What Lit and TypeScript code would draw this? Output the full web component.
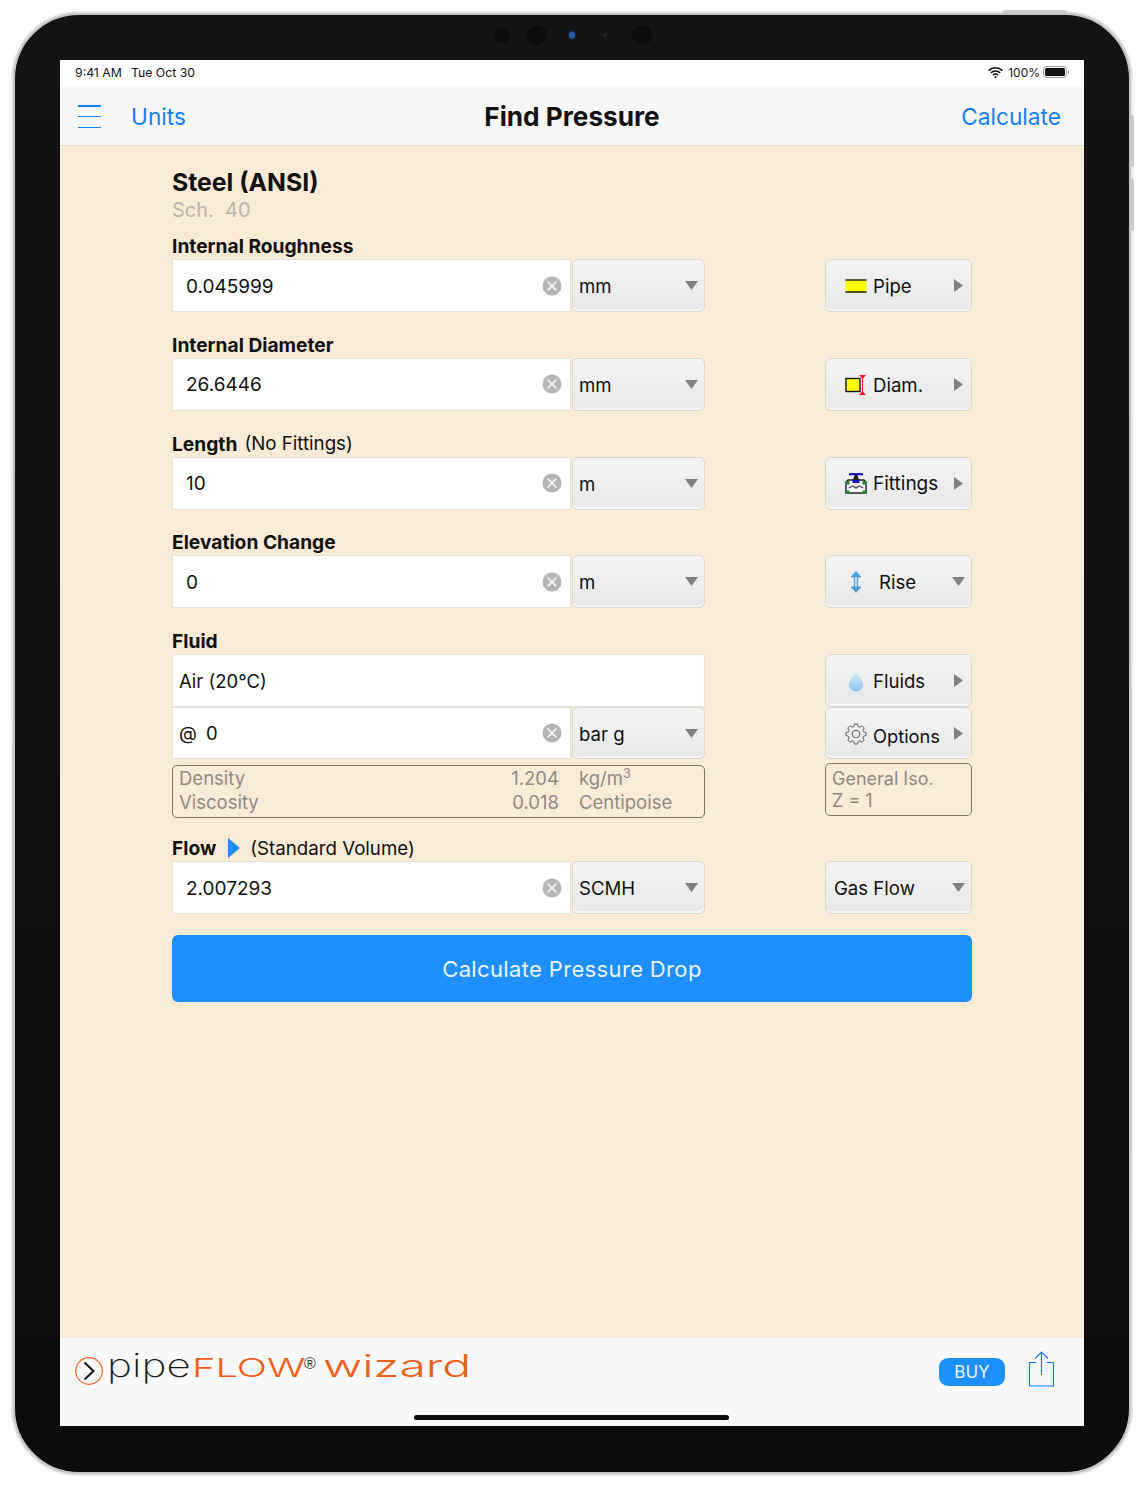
import { LitElement, html, css, svg } from "lit";
import { customElement } from "lit/decorators.js";

const clearIcon = html`<svg class="clear" viewBox="0 0 20 20"><circle cx="10" cy="10" r="9.5" fill="#b5b5b5"/><path d="M6.2 6.2l7.6 7.6M13.8 6.2l-7.6 7.6" stroke="#f4f4f4" stroke-width="1.8" stroke-linecap="round"/></svg>`;
const down = html`<svg class="tri-d" viewBox="0 0 13 9"><path d="M0 0h13L6.5 9z" fill="#808080"/></svg>`;
const right = html`<svg class="tri-r" viewBox="0 0 9 13"><path d="M0 0l9 6.5L0 13z" fill="#808080"/></svg>`;

function gearPath(): string {
  const teeth = 8;
  const pts: string[] = [];
  const cx = 11, cy = 11, R = 10.2, r = 7.8;
  const step = (Math.PI * 2) / teeth;
  for (let i = 0; i < teeth; i++) {
    const a = i * step - Math.PI / 2;
    const seq: [number, number][] = [
      [a - step * 0.36, r],
      [a - step * 0.2, R],
      [a + step * 0.2, R],
      [a + step * 0.36, r],
    ];
    for (const [t, rad] of seq) {
      pts.push(`${(cx + rad * Math.cos(t)).toFixed(2)} ${(cy + rad * Math.sin(t)).toFixed(2)}`);
    }
  }
  return "M" + pts.join("L") + "Z";
}

const pipeIcon = html`<svg class="ic" viewBox="0 0 22 14"><rect x="0.5" y="0.5" width="21" height="13" fill="#ffff00"/><path d="M0.5 1h21M0.5 13h21" stroke="#222" stroke-width="1.6"/></svg>`;
const diamIcon = html`<svg class="ic" viewBox="0 0 22 22"><rect x="1" y="4.5" width="14" height="13" fill="#ffff00" stroke="#111" stroke-width="1.4"/><path d="M14 1h7l-3.500 4zM14 21h7l-3.500-4z" fill="#f01818"/><path d="M17.500 4v14" stroke="#f01818" stroke-width="1"/></svg>`;
const fitIcon = html`<svg class="ic" viewBox="0 0 22 22"><path d="M4 1.200h14" stroke="#1414c8" stroke-width="2.200"/><path d="M9.700 2h2.600l1.800 5H7.900z" fill="#222"/><path d="M3 7h16l2 2v11H1V9z" fill="#f6f6f6" stroke="#222" stroke-width="1.500"/><rect x="7.500" y="7" width="7" height="3" fill="#1414c8"/><path d="M1 8h3.500v3.500H1zM17.500 8H21v3.500h-3.500zM1 17.500h3.500V21H1zM17.500 17.500H21V21h-3.500z" fill="#1a8a2a"/><path d="M4 15l3.500-2 3.500 2 3.500-2 3.500 2" stroke="#444" fill="none" stroke-width="1.300"/></svg>`;
const riseIcon = html`<svg class="ic rise" viewBox="0 0 12 22"><path d="M6 0.5l4.800 5.500H7.800v10h3L6 21.500l-4.800-5.500h3V6h-3z" fill="#4a9fe0" stroke="#2f7fc0" stroke-width="0.500"/><path d="M5.100 6h1.800v10H5.100z" fill="#c6e4fa"/></svg>`;
const dropIcon = html`<svg class="ic drop" viewBox="0 0 14 20"><defs><linearGradient id="dr" x1="0" y1="0" x2="0" y2="1"><stop offset="0" stop-color="#d8edfb"/><stop offset="1" stop-color="#8ec4ee"/></linearGradient></defs><path d="M7 0.5C8 4 13.500 9 13.500 13.200A6.500 6.500 0 0 1 0.500 13.200C0.500 9 6 4 7 0.500z" fill="url(#dr)"/></svg>`;
const gearIcon = html`<svg class="ic" viewBox="0 0 22 22" fill="none" stroke="#5a5a5a" stroke-width="1"><path d="${gearPath()}"/><circle cx="11" cy="11" r="3.800"/></svg>`;

type RowDef = { label: unknown; value: string; unit: string; icon: unknown; btn: string; arrow: "r" | "d"; cls?: string };

const rows: RowDef[] = [
  { label: html`<b>Internal Roughness</b>`, value: "0.045999", unit: "mm", icon: pipeIcon, btn: "Pipe", arrow: "r" },
  { label: html`<b>Internal Diameter</b>`, value: "26.6446", unit: "mm", icon: diamIcon, btn: "Diam.", arrow: "r" },
  { label: html`<b>Length</b><span class="note">(No Fittings)</span>`, value: "10", unit: "m", icon: fitIcon, btn: "Fittings", arrow: "r", cls: "is-fit" },
  { label: html`<b>Elevation Change</b>`, value: "0", unit: "m", icon: riseIcon, btn: "Rise", arrow: "d", cls: "is-rise" },
];

@customElement("app-root")
export class AppRoot extends LitElement {
  static styles = css`
    :host { display: block; width: 1144px; height: 1487px; padding: 13px; box-sizing: border-box; background: #fff;
      font-family: Inter, "Liberation Sans", sans-serif; color: #111; position: relative; overflow: hidden; }
    * { box-sizing: border-box; }
    .device { position: relative; width: 1118px; height: 1461px; padding: 45px; border: 2px solid #c4c4c4; border-radius: 66px;
      background: linear-gradient(#141414, #0b0b0b); box-shadow: 0 0 0 1px #e6e6e6, 0 0 2px 1px #aaa; }
    .hw { position: absolute; background: #c9c9c9; }
    .hw.top { left: 988px; top: -5px; width: 64px; height: 3px; border-radius: 2px 2px 0 0; }
    .hw.r1 { right: -5px; top: 100px; width: 3px; height: 52px; border-radius: 0 2px 2px 0; }
    .hw.r2 { right: -5px; top: 163px; width: 3px; height: 53px; border-radius: 0 2px 2px 0; }
    .cam { position: absolute; border-radius: 50%; background: #0b0b0b; transform: translate(-50%, -50%); top: 20px; }
    .c1 { left: 487px; width: 16px; height: 16px; }
    .c2 { left: 522px; width: 20px; height: 20px; }
    .c3 { left: 557px; width: 6px; height: 7px; background: #1f5ea8; box-shadow: 0 0 0 1.500px #1a2430; }
    .c4 { left: 590px; width: 4px; height: 4px; background: #222; }
    .c5 { left: 627px; width: 20px; height: 20px; }
    .screen { position: relative; width: 1024px; height: 1366px; display: flex; flex-direction: column; background: #faebd7; overflow: hidden; }

    .status { height: 27px; flex: none; background: #fff; display: flex; align-items: center; padding: 0 15px 3px; font-size: 12.300px; color: #111; }
    .status .date { margin-left: 9px; }
    .status .spacer { flex: 1; }
    .status .pct { margin: 0 3px 0 5px; font-size: 12px; }
    .wifi { width: 15px; height: 11px; }
    .batt { width: 26px; height: 12px; }

    .nav { height: 59px; flex: none; background: #f8f8f8; border-bottom: 1px solid #e6dccd; display: grid; grid-template-columns: 1fr auto 1fr; align-items: center; padding: 1px 18px 0 18px; font-size: 22.700px; color: #147efb; }
    .nav .left { display: flex; align-items: center; gap: 30px; }
    .burger { width: 23px; height: 23px; display: flex; flex-direction: column; justify-content: space-between; }
    .burger i { display: block; height: 1.500px; background: #147efb; }
    .nav h1 { margin: 0; font-size: 26.200px; font-weight: 700; color: #111; }
    .nav .calc { justify-self: end; margin-right: 5px; }

    main { flex: 1; padding: 20px 112px 0; }
    .title { font-size: 24.800px; font-weight: 700; line-height: 32px; color: #111; }
    .sub { font-size: 20px; line-height: 25px; color: #b8b4ac; margin-bottom: 10px; white-space: pre; }
    .label { height: 26px; display: flex; align-items: center; font-size: 18.700px; color: #111; }
    .label b { font-weight: 700; font-size: 19.200px; }
    .note { margin-left: 7px; }
    .row { display: grid; grid-template-columns: 399px 134px 120px 147px; height: 53px; margin-bottom: 19.750px; }
    .row .side { grid-column: 4; }
    .input { background: #fff; border: 1px solid #e4e1dc; display: flex; align-items: center; font-size: 19px; padding: 1px 8px 0 13px; justify-content: space-between; height: 100%; }
    .input.tight { padding-left: 6px; font-size: 18.500px; }
    .at { margin-right: 9px; }
    .pres .input { padding-top: 0; }
    .clear { width: 20px; height: 20px; flex: none; margin-top: -1px; }
    .sel, .btn { background: linear-gradient(#f4f4f4, #e7e7e7); border: 1px solid #d9d7d3; border-radius: 6px; box-shadow: inset 0 -2px 0 #f6f6f6; display: flex; align-items: center; font-size: 18.600px; height: 100%; white-space: nowrap; padding-top: 1px; }
    .sel { margin-left: 1px; padding: 1px 6px 0; justify-content: space-between; }
    .tri-d { width: 13px; height: 9px; flex: none; margin-top: -1px; }
    .tri-r { width: 9px; height: 13px; flex: none; margin-top: -1px; }
    .btn { padding: 1px 8px 0 19px; gap: 6px; }
    .btn span { flex: 1; }
    .ic { width: 22px; height: 22px; flex: none; }
    .rise { padding: 0 5px; }
    .drop { padding: 0 3px; }
    .is-rise { gap: 12px; }
    .is-rise .tri-d { margin-right: -2px; }
    .is-fit span { font-size: 19px; }
    .gas { padding-left: 8px; }
    .gas .tri-d { margin-right: -2px; }
    .opt span { font-size: 18.300px; padding-top: 4px; }

    .fluid { display: grid; grid-template-columns: 533px 120px 147px; }
    .fluid .side { grid-column: 3; }
    .fluid .stack { height: 52px; }
    .fluid .name { height: 53px; }
    .pres { display: grid; grid-template-columns: 399px 134px; height: 52px; }
    .info { border: 1px solid #7e776b; border-radius: 5px; color: #8e8a84; font-size: 18.500px; height: 53px; }
    .dens { margin-top: 6px; display: grid; grid-template-columns: 1fr 80px 139px; padding: 0 6px 3px; align-items: center; line-height: 24px; align-content: center; }
    .dens .n { text-align: right; }
    .dens .u { padding-left: 20px; white-space: nowrap; }
    sup { font-size: 12.500px; line-height: 0; vertical-align: 7px; }
    .iso { margin-top: 4px; padding: 0 6px; line-height: 22px; font-size: 18px; display: flex; flex-direction: column; justify-content: center; white-space: nowrap; }
    .flowlabel { margin-top: 17px; }
    .flowlabel svg { width: 12px; height: 20px; margin: 0 10px 0 12px; flex: none; }
    .flowlabel .note { margin-left: 0; }
    .go { display: flex; align-items: center; justify-content: center; height: 67px; background: #1e8ffe; color: #e9f4ff; border-radius: 6px; font-size: 22px; margin-top: 21px; letter-spacing: .35px; }

    .bar { position: relative; height: 88px; flex: none; background: #f9f9f9; display: flex; align-items: flex-start; padding: 4px 29px 0 15px; }
    .logo { width: 410px; height: 56px; flex: none; }
    .bar .spacer { flex: 1; }
    .buy { width: 66px; height: 28px; margin-top: 16px; background: #1e8ffe; color: #e9f4ff; border-radius: 9px; display: flex; align-items: center; justify-content: center; font-size: 17px; }
    .share { width: 27px; height: 36px; margin-left: 23px; margin-top: 9px; flex: none; }
    .home { position: absolute; left: 354px; bottom: 6px; width: 315px; height: 5px; border-radius: 3px; background: #0a0a0a; }
  `;

  private renderRow(r: RowDef) {
    return html`
      <div class="label">${r.label}</div>
      <div class="row">
        <div class="input"><span>${r.value}</span>${clearIcon}</div>
        <div class="sel"><span>${r.unit}</span>${down}</div>
        <div class="btn side ${r.cls ?? ""}">${r.icon}<span>${r.btn}</span>${r.arrow === "r" ? right : down}</div>
      </div>`;
  }

  private logo() {
    return html`<svg class="logo" viewBox="0 0 410 56">
      <circle cx="14" cy="29" r="13.300" fill="none" stroke="#f0652a" stroke-width="1.200"/>
      <path d="M9.500 20.500L18.500 29l-9 8.500" fill="none" stroke="#111" stroke-width="2"/>
      ${svg`<text transform="translate(32 35) scale(1.28 1)" font-family="Inter" font-weight="200" font-size="33" fill="#1a1a1a">pipe</text>`}
      ${svg`<text transform="translate(117 35) scale(1.53 1)" font-family="Inter" font-weight="300" font-size="26" fill="#ee6018">FLOW</text>`}
      ${svg`<text x="229" y="27" font-family="Liberation Sans" font-size="16" fill="#333">®</text>`}
      ${svg`<text transform="translate(248 35) scale(1.55 1)" font-family="Inter" font-weight="300" font-size="31" fill="#ee6018">wizard</text>`}
    </svg>`;
  }

  render() {
    return html`
      <div class="device">
        <i class="hw top"></i><i class="hw r1"></i><i class="hw r2"></i>
        <i class="cam c1"></i><i class="cam c2"></i><i class="cam c3"></i><i class="cam c4"></i><i class="cam c5"></i>
        <div class="screen">
          <div class="status">
            <span>9:41 AM</span><span class="date">Tue Oct 30</span><span class="spacer"></span>
            <svg class="wifi" viewBox="0 0 15 11"><path d="M.6 3.600a10 10 0 0 1 13.800 0M2.800 5.900a7 7 0 0 1 9.400 0M5 8.100a3.800 3.800 0 0 1 5 0" fill="none" stroke="#111" stroke-width="1.500"/><circle cx="7.500" cy="10" r="1" fill="#111"/></svg>
            <span class="pct">100%</span>
            <svg class="batt" viewBox="0 0 26 12"><rect x=".5" y=".5" width="23" height="11" rx="3" fill="none" stroke="#999"/><rect x="2" y="2" width="20" height="8" rx="1.500" fill="#111"/><path d="M25 4v4a2 2 0 0 0 1-2 2 2 0 0 0-1-2z" fill="#999"/></svg>
          </div>
          <div class="nav">
            <div class="left"><div class="burger"><i></i><i></i><i></i></div><span>Units</span></div>
            <h1>Find Pressure</h1>
            <span class="calc">Calculate</span>
          </div>
          <main>
            <div class="title">Steel (ANSI)</div>
            <div class="sub">Sch.  40</div>
            ${rows.map((r) => this.renderRow(r))}
            <div class="label"><b>Fluid</b></div>
            <div class="fluid">
              <div>
                <div class="input tight name"><span>Air (20°C)</span></div>
                <div class="pres">
                  <div class="input tight"><span><span class="at">@</span>0</span>${clearIcon}</div>
                  <div class="sel"><span>bar g</span>${down}</div>
                </div>
                <div class="info dens">
                  <span>Density</span><span class="n">1.204</span><span class="u">kg/m<sup>3</sup></span>
                  <span>Viscosity</span><span class="n">0.018</span><span class="u">Centipoise</span>
                </div>
              </div>
              <div class="side">
                <div class="btn stack name">${dropIcon}<span>Fluids</span>${right}</div>
                <div class="btn stack opt">${gearIcon}<span>Options</span>${right}</div>
                <div class="info iso"><span>General Iso.</span><span>Z = 1</span></div>
              </div>
            </div>
            <div class="label flowlabel"><b>Flow</b><svg viewBox="0 0 12 20"><path d="M0 0l12 10L0 20z" fill="#1e8ffe"/></svg><span class="note">(Standard Volume)</span></div>
            <div class="row">
              <div class="input"><span>2.007293</span>${clearIcon}</div>
              <div class="sel"><span>SCMH</span>${down}</div>
              <div class="btn side gas"><span>Gas Flow</span>${down}</div>
            </div>
            <div class="go">Calculate Pressure Drop</div>
          </main>
          <div class="bar">
            ${this.logo()}
            <span class="spacer"></span>
            <div class="buy">BUY</div>
            <svg class="share" viewBox="0 0 27 36" fill="none" stroke="#147efb" stroke-width="1.200"><path d="M8.500 11.500H1.500v23.500h24V11.500h-7M13.500 24V1M7 7.500L13.500 1 20 7.500"/></svg>
            <div class="home"></div>
          </div>
        </div>
      </div>
    `;
  }
}
